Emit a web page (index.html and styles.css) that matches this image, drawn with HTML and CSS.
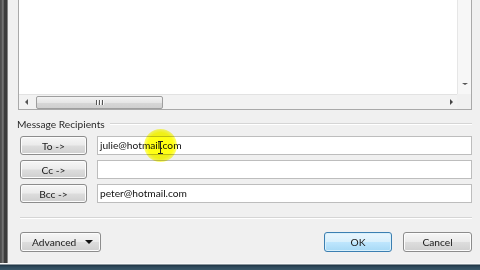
FILE: index.html
```html
<!DOCTYPE html>
<html lang="en">
<head>
    <meta charset="UTF-8">
    <title>Message Recipients</title>
    <link rel="stylesheet" href="styles.css">
</head>
<body>
    <div class="window">
        <div class="frame-left"></div>

        <div class="dialog">
            <!-- message body, scrolled to the bottom -->
            <div class="body-box">
                <div class="body-text"></div>
                <div class="vscroll"><span class="arrow-down"></span></div>
                <div class="hscroll">
                    <span class="arrow-left"></span>
                    <div class="thumb"><span class="grip"></span><span class="grip"></span><span class="grip"></span></div>
                    <span class="track"></span>
                    <span class="arrow-right"></span>
                </div>
                <div class="corner"></div>
            </div>

            <div class="group-title">
                <span>Message Recipients</span>
                <span class="group-line"></span>
            </div>

            <div class="recipients">
                <div class="row">
                    <button class="btn btn-addr">To -&gt;</button>
                    <div class="field">julie@hotmail.com</div>
                </div>
                <div class="row">
                    <button class="btn btn-addr">Cc -&gt;</button>
                    <div class="field"></div>
                </div>
                <div class="row">
                    <button class="btn btn-addr">Bcc -&gt;</button>
                    <div class="field">peter@hotmail.com</div>
                </div>
                <div class="highlight"></div>
                <div class="ibeam"></div>
            </div>

            <div class="separator"></div>

            <div class="footer">
                <button class="btn btn-advanced">Advanced <span class="caret"></span></button>
                <div class="spacer"></div>
                <button class="btn btn-default">OK</button>
                <button class="btn btn-cancel">Cancel</button>
            </div>
        </div>
    </div>
    <div class="frame-bottom"></div>
</body>
</html>
```

FILE: styles.css
```css
body {
    margin: 0;
    width: 480px;
    height: 270px;
    overflow: hidden;
    background-color: #f0f0f0;
    font-family: Lato, "Liberation Sans", sans-serif;
    font-size: 10.2px;
    color: #1a1a1a;
}

.window {
    display: flex;
    height: 263px;
}

.frame-left {
    width: 8px;
    flex: none;
    background: linear-gradient(to right, #4a4a4a 0, #5a5a5a 2px, #8a8a8a 3px, #3e3e3e 4px, #3a3a3a 7px, #cfcfcf 8px);
}

.dialog {
    flex: 1;
    display: flex;
    flex-direction: column;
    padding: 0 8px 0 10px;
    background-color: #f0f0f0;
}

/* message body */
.body-box {
    height: 110px;
    display: grid;
    grid-template-columns: 1fr 14px;
    grid-template-rows: 1fr 15px;
    border: 1px solid #a9a9a9;
    border-top: none;
    background-color: #fff;
    box-sizing: border-box;
}

.body-text {
    background-color: #fff;
}

.vscroll {
    position: relative;
    background-color: #f7f7f7;
    border-left: 1px solid #e6e6e6;
}

.arrow-down {
    position: absolute;
    left: 4px;
    bottom: 9px;
    width: 0;
    height: 0;
    border-left: 3px solid transparent;
    border-right: 3px solid transparent;
    border-top: 2px solid #555;
}

.hscroll {
    display: flex;
    align-items: center;
    background-color: #f2f2f2;
    border-top: 1px solid #e2e2e2;
    padding: 0 4px 0 6px;
}

.arrow-left,
.arrow-right {
    width: 0;
    height: 0;
    border-top: 3px solid transparent;
    border-bottom: 3px solid transparent;
}

.arrow-left {
    border-right: 3px solid #555;
    margin-right: 8px;
}

.arrow-right {
    border-left: 3px solid #444;
    margin-left: 4px;
}

.thumb {
    width: 127px;
    height: 13px;
    box-sizing: border-box;
    border: 1px solid #9e9e9e;
    border-radius: 2px;
    background: linear-gradient(to bottom, #f3f3f3 0, #e6e6e6 50%, #d7d7d7 51%, #cfcfcf 100%);
    display: flex;
    align-items: center;
    justify-content: center;
    gap: 1px;
}

.grip {
    width: 1px;
    height: 5px;
    background-color: #555;
    border-right: 1px solid #fafafa;
}

.track {
    flex: 1;
}

.corner {
    background-color: #f0f0f0;
}

/* recipients group */
.group-title {
    display: flex;
    align-items: center;
    gap: 5px;
    margin: 6px 0 0 -1px;
    height: 16px;
    color: #2a2a2a;
}

.group-line {
    flex: 1;
    height: 1px;
    background-color: #d5d5d5;
    border-bottom: 1px solid #fff;
}

.recipients {
    position: relative;
    display: flex;
    flex-direction: column;
    gap: 5px;
    margin-top: 4px;
}

.row {
    display: flex;
    align-items: center;
    gap: 10px;
}

.btn {
    font-family: inherit;
    font-size: 10.2px;
    color: #1a1a1a;
    padding: 0;
    height: 19px;
    border: 1px solid #8c8c8c;
    border-radius: 3px;
    background: linear-gradient(to bottom, #f6f6f6 0, #ebebeb 48%, #dddddd 52%, #cfcfcf 100%);
    box-shadow: inset 0 0 0 1px #fcfcfc;
}

.btn-addr {
    width: 67px;
    margin-left: 2px;
}

.field {
    flex: 1;
    height: 19px;
    box-sizing: border-box;
    border: 1px solid #bdbdbd;
    background-color: #fff;
    padding: 0 2px;
    line-height: 17px;
    color: #111;
}

.highlight {
    position: absolute;
    left: 126px;
    top: -7px;
    width: 33px;
    height: 33px;
    border-radius: 50%;
    background: radial-gradient(circle, #ffff10 0, #ffff18 55%, rgba(255, 255, 60, 0.6) 75%, rgba(255, 255, 100, 0) 100%);
    mix-blend-mode: multiply;
}

.ibeam {
    position: absolute;
    left: 142px;
    top: 5px;
    width: 1px;
    height: 13px;
    background-color: #222;
}

.ibeam::before,
.ibeam::after {
    content: "";
    position: absolute;
    left: -2px;
    width: 5px;
    height: 1px;
    background-color: #222;
}

.ibeam::before {
    top: 0;
}

.ibeam::after {
    bottom: 0;
}

.separator {
    margin: 14px 0 0 2px;
    height: 1px;
    background-color: #d5d5d5;
    border-bottom: 1px solid #fff;
}

.footer {
    display: flex;
    align-items: center;
    gap: 11px;
    margin-top: 13px;
    padding-left: 2px;
}

.btn-advanced {
    width: 81px;
    height: 20px;
    display: flex;
    align-items: center;
    justify-content: space-between;
    padding: 0 7px 0 11px;
}

.caret {
    width: 0;
    height: 0;
    border-left: 4px solid transparent;
    border-right: 4px solid transparent;
    border-top: 4px solid #111;
}

.spacer {
    flex: 1;
}

.btn-default {
    width: 68px;
    height: 20px;
    border-color: #3c7fb1;
    background: linear-gradient(to bottom, #eaf6fd 0, #d9f0fc 48%, #bee6fd 52%, #a7d9f5 100%);
    box-shadow: inset 0 0 0 1px #d8f0fb;
}

.btn-cancel {
    width: 69px;
    height: 20px;
}

.frame-bottom {
    height: 7px;
    background: linear-gradient(to bottom, #fafafa 0, #f4f4f4 1px, #1f3444 2px, #2f4a5c 4px, #3a5668 7px);
}
```
